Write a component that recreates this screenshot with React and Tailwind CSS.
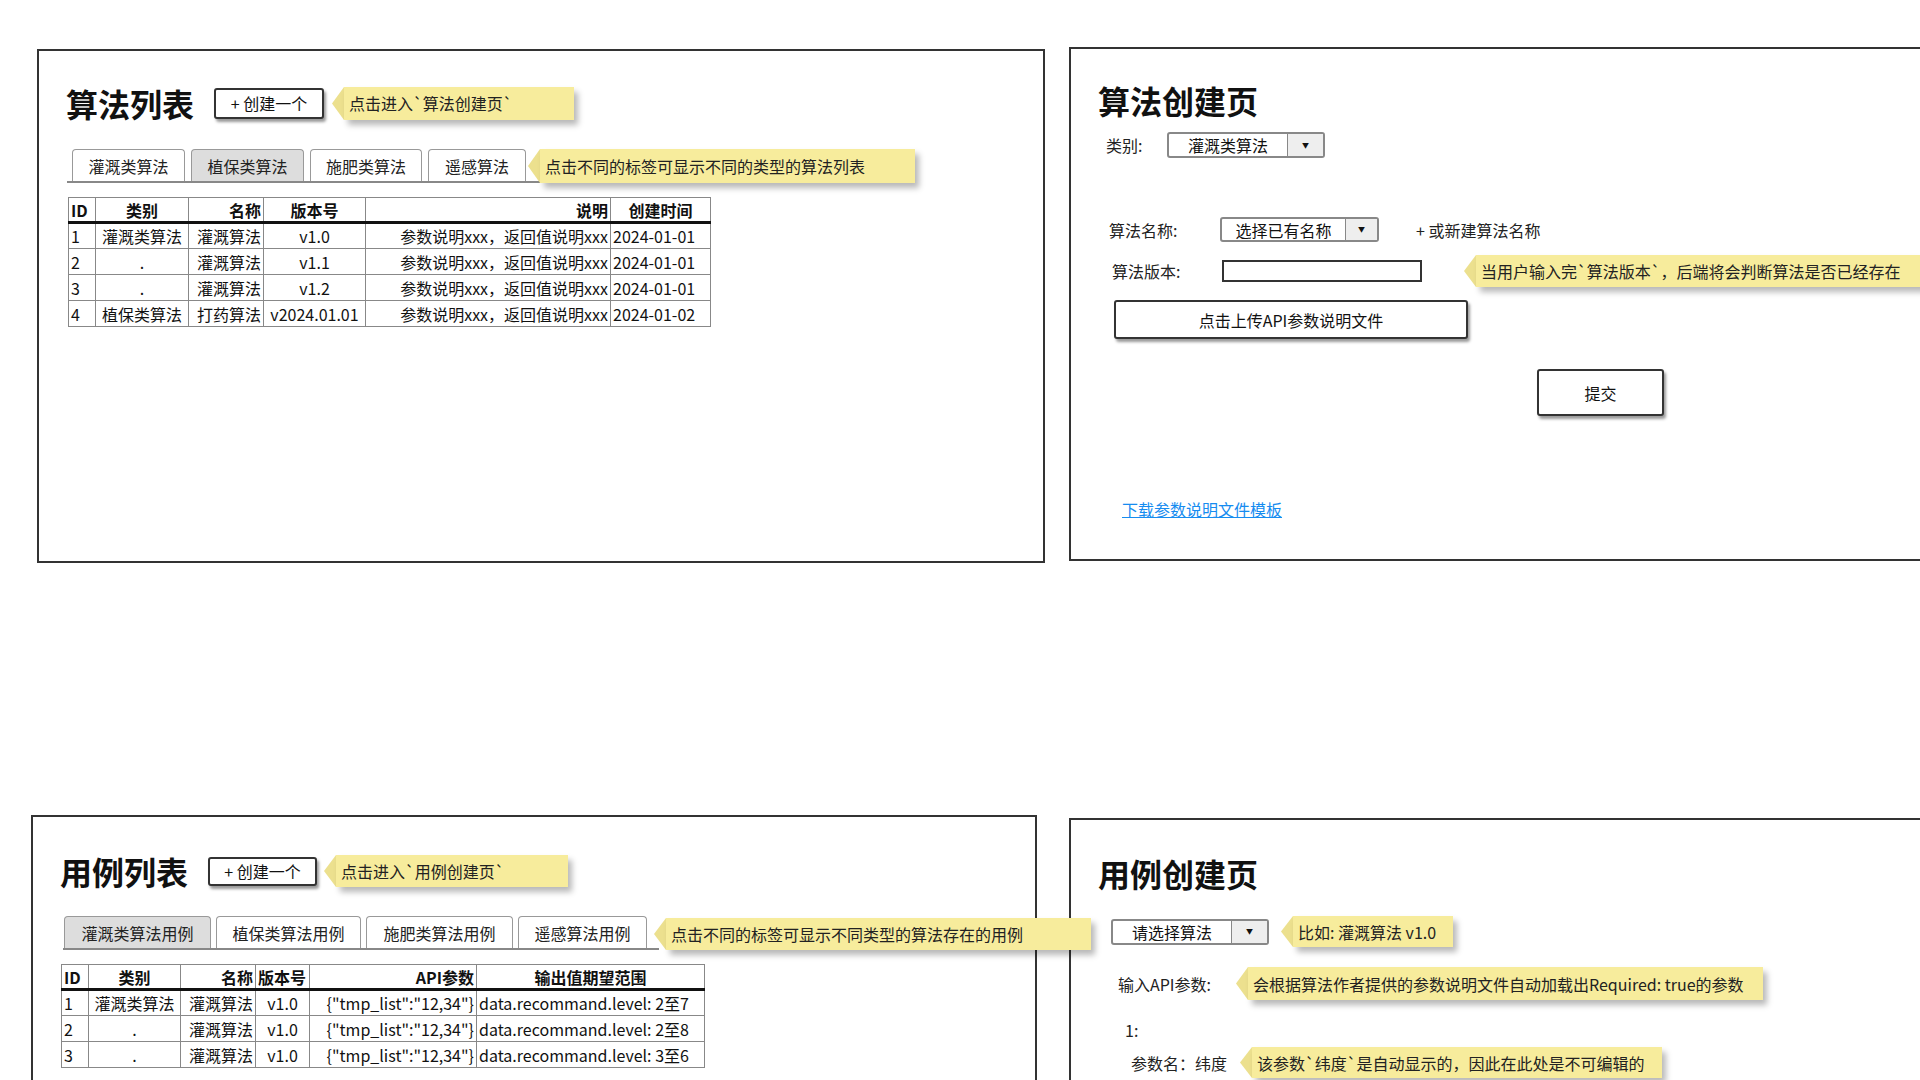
import clsx from "clsx";

const Note = ({ className, children }) => (
  <div className={clsx("relative flex shrink-0", className)}>
    <svg width="12" className="h-full shrink-0" viewBox="0 0 12 10" preserveAspectRatio="none">
      <polygon points="12,0 0,5 12,10" fill="#ece08e" />
    </svg>
    <div className="flex-1 flex items-center bg-[#f7ec9c] pl-[5px] pr-3 text-[16px] text-[#222] whitespace-nowrap shadow-[4px_5px_6px_rgba(0,0,0,0.28)]">
      {children}
    </div>
  </div>
);

const Btn = ({ className, children }) => (
  <div
    className={clsx(
      "flex items-center justify-center shrink-0 border-2 border-[#333] rounded-[3px] bg-white text-[16px] text-[#111] shadow-[2px_3px_3px_rgba(0,0,0,0.4)]",
      className
    )}
  >
    {children}
  </div>
);

const Select = ({ className, text, textW }) => (
  <div className={clsx("flex shrink-0 border-2 border-[#888] rounded-[3px] bg-white", className)}>
    <div className={clsx("flex items-center justify-center text-[16px] text-[#111]", textW)}>{text}</div>
    <div className="flex-1 flex items-center justify-center border-l border-[#888] bg-[#eeeeee] text-[7px] text-[#111]">▼</div>
  </div>
);

const Tabs = ({ tabs, active, className }) => (
  <div className={clsx("flex items-end border-b-2 border-[#888]", className)}>
    {tabs.map((t, i) => (
      <div
        key={t.label}
        className={clsx(
          "flex items-center justify-center h-[32px] border border-b-0 border-[#999] rounded-t-[4px] text-[16px] text-[#222]",
          t.w,
          i === active ? "bg-[#dddddd]" : "bg-white"
        )}
      >
        {t.label}
      </div>
    ))}
  </div>
);

const Table = ({ cols, head, rows, className }) => (
  <table className={clsx("table-fixed border-collapse text-[16px] text-[#111]", className)}>
    <colgroup>
      {cols.map((w, i) => (
        <col key={i} className={w} />
      ))}
    </colgroup>
    <thead>
      <tr className="h-[25px] border-b-[3px] border-b-[#111]">
        {head.map(([label, align], i) => (
          <th key={i} className={clsx("border-x border-t border-[#888] px-[2px] font-bold whitespace-nowrap leading-none", align)}>
            {label}
          </th>
        ))}
      </tr>
    </thead>
    <tbody>
      {rows.map((r, ri) => (
        <tr key={ri} className="h-[26px]">
          {r.map(([v, align], i) => (
            <td key={i} className={clsx("border border-[#888] px-[2px] whitespace-nowrap leading-none", align)}>
              {v}
            </td>
          ))}
        </tr>
      ))}
    </tbody>
  </table>
);

const desc = "参数说明xxx，返回值说明xxx";

const algoRows = [
  [["1", "text-left"], ["灌溉类算法", "text-center"], ["灌溉算法", "text-right"], ["v1.0", "text-center"], [desc, "text-right"], ["2024-01-01", "text-left"]],
  [["2", "text-left"], [".", "text-center"], ["灌溉算法", "text-right"], ["v1.1", "text-center"], [desc, "text-right"], ["2024-01-01", "text-left"]],
  [["3", "text-left"], [".", "text-center"], ["灌溉算法", "text-right"], ["v1.2", "text-center"], [desc, "text-right"], ["2024-01-01", "text-left"]],
  [["4", "text-left"], ["植保类算法", "text-center"], ["打药算法", "text-right"], ["v2024.01.01", "text-center"], [desc, "text-right"], ["2024-01-02", "text-left"]],
];

const api = '{"tmp_list":"12,34"}';

const caseRows = [
  [["1", "text-left"], ["灌溉类算法", "text-center"], ["灌溉算法", "text-right"], ["v1.0", "text-center"], [api, "text-right"], ["data.recommand.level: 2至7", "text-left"]],
  [["2", "text-left"], [".", "text-center"], ["灌溉算法", "text-right"], ["v1.0", "text-center"], [api, "text-right"], ["data.recommand.level: 2至8", "text-left"]],
  [["3", "text-left"], [".", "text-center"], ["灌溉算法", "text-right"], ["v1.0", "text-center"], [api, "text-right"], ["data.recommand.level: 3至6", "text-left"]],
];

export default function App() {
  return (
    <div className="relative w-[1920px] h-[1080px] overflow-hidden bg-white text-[#111] font-['Noto_Sans_CJK_SC',sans-serif]">
      {/* 算法列表 */}
      <div className="absolute left-[37px] top-[49px] w-[1008px] h-[514px] border-2 border-[#333] pl-[27px] pt-[32px]">
        <div className="flex items-center h-[40px]">
          <h1 className="text-[32px] leading-[40px] font-bold">算法列表</h1>
          <Btn className="ml-[20px] w-[110px] h-[31px]">+ 创建一个</Btn>
          <Note className="ml-[8px] w-[242px] h-[33px]">点击进入`算法创建页`</Note>
        </div>
        <div className="flex items-end mt-[26px] ml-[1px]">
          <Tabs
            className="pl-[5px] pr-[16px] gap-[6px]"
            active={1}
            tabs={[
              { label: "灌溉类算法", w: "w-[113px]" },
              { label: "植保类算法", w: "w-[113px]" },
              { label: "施肥类算法", w: "w-[112px]" },
              { label: "遥感算法", w: "w-[98px]" },
            ]}
          />
          <Note className="-ml-[14px] mb-[0px] w-[387px] h-[34px]">点击不同的标签可显示不同的类型的算法列表</Note>
        </div>
        <Table
          className="mt-[14px] ml-[2px] w-[642px]"
          cols={["w-[27px]", "w-[93px]", "w-[75px]", "w-[102px]", "w-[245px]", "w-[100px]"]}
          head={[["ID", "text-left"], ["类别", "text-center"], ["名称", "text-right"], ["版本号", "text-center"], ["说明", "text-right"], ["创建时间", "text-center"]]}
          rows={algoRows}
        />
      </div>

      {/* 算法创建页 */}
      <div className="absolute left-[1069px] top-[47px] w-[880px] h-[514px] border-2 border-[#333] pl-[27px] pt-[31px]">
        <h1 className="text-[32px] leading-[40px] font-bold">算法创建页</h1>
        <div className="flex items-center h-[26px] mt-[12px]">
          <span className="ml-[8px] w-[61px] text-[16px] text-[#222]">类别:</span>
          <Select className="w-[158px] h-[26px]" textW="w-[118px]" text="灌溉类算法" />
        </div>
        <div className="flex items-center h-[25px] mt-[59px]">
          <span className="ml-[11px] w-[111px] text-[16px] text-[#222]">算法名称:</span>
          <Select className="w-[159px] h-[25px]" textW="w-[123px]" text="选择已有名称" />
          <span className="ml-[37px] text-[16px] text-[#222]">+ 或新建算法名称</span>
        </div>
        <div className="flex items-center h-[32px] mt-[13px]">
          <span className="ml-[14px] w-[110px] text-[16px] text-[#222]">算法版本:</span>
          <div className="w-[200px] h-[22px] border-2 border-[#333] bg-white shrink-0" />
          <Note className="ml-[42px] w-[480px] h-[32px]">当用户输入完`算法版本`，后端将会判断算法是否已经存在</Note>
        </div>
        <Btn className="mt-[13px] ml-[16px] w-[354px] h-[39px]">点击上传API参数说明文件</Btn>
        <Btn className="mt-[30px] ml-[439px] w-[127px] h-[47px]">提交</Btn>
        <div className="mt-[82px] ml-[24px] text-[16px] leading-[22px] text-[#168cf0] underline">下载参数说明文件模板</div>
      </div>

      {/* 用例列表 */}
      <div className="absolute z-10 left-[31px] top-[815px] w-[1006px] h-[300px] border-2 border-[#333] pl-[27px] pt-[34px]">
        <div className="flex items-center h-[40px]">
          <h1 className="text-[32px] leading-[40px] font-bold">用例列表</h1>
          <Btn className="ml-[20px] w-[109px] h-[29px]">+ 创建一个</Btn>
          <Note className="ml-[7px] w-[244px] h-[32px]">点击进入`用例创建页`</Note>
        </div>
        <div className="flex items-end mt-[25px] ml-[3px]">
          <Tabs
            className="pl-[1px] pr-[12px] gap-[5px]"
            active={0}
            tabs={[
              { label: "灌溉类算法用例", w: "w-[147px]" },
              { label: "植保类算法用例", w: "w-[145px]" },
              { label: "施肥类算法用例", w: "w-[147px]" },
              { label: "遥感算法用例", w: "w-[129px]" },
            ]}
          />
          <Note className="-ml-[5px] mb-[0px] w-[437px] h-[32px]">点击不同的标签可显示不同类型的算法存在的用例</Note>
        </div>
        <Table
          className="mt-[14px] ml-[1px] w-[643px]"
          cols={["w-[27px]", "w-[92px]", "w-[75px]", "w-[54px]", "w-[167px]", "w-[228px]"]}
          head={[["ID", "text-left"], ["类别", "text-center"], ["名称", "text-right"], ["版本号", "text-left"], ["API参数", "text-right"], ["输出值期望范围", "text-center"]]}
          rows={caseRows}
        />
      </div>

      {/* 用例创建页 */}
      <div className="absolute left-[1069px] top-[818px] w-[880px] h-[300px] border-2 border-[#333] pl-[27px] pt-[33px]">
        <h1 className="text-[32px] leading-[40px] font-bold">用例创建页</h1>
        <div className="flex items-center h-[31px] mt-[23px]">
          <Select className="ml-[13px] w-[158px] h-[26px]" textW="w-[118px]" text="请选择算法" />
          <Note className="ml-[12px] w-[172px] h-[31px]">比如: 灌溉算法 v1.0</Note>
        </div>
        <div className="flex items-center h-[33px] mt-[20px]">
          <span className="ml-[20px] w-[118px] text-[16px] text-[#222]">输入API参数:</span>
          <Note className="w-[527px] h-[33px]">会根据算法作者提供的参数说明文件自动加载出Required: true的参数</Note>
        </div>
        <div className="mt-[19px] ml-[27px] text-[16px] leading-[22px] text-[#222]">1:</div>
        <div className="flex items-center h-[31px] mt-[6px]">
          <span className="ml-[33px] w-[109px] text-[16px] text-[#222]">参数名：纬度</span>
          <Note className="w-[422px] h-[31px]">该参数`纬度`是自动显示的，因此在此处是不可编辑的</Note>
        </div>
      </div>
    </div>
  );
}
